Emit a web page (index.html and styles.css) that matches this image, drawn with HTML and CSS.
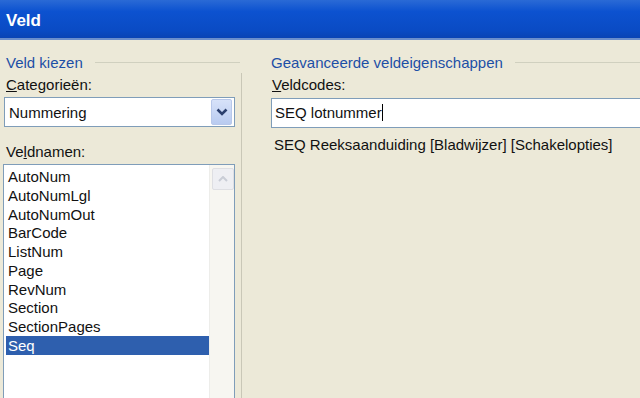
FILE: index.html
```html
<!DOCTYPE html>
<html lang="nl">
<head>
    <meta charset="UTF-8">
    <title>Veld</title>
    <link rel="stylesheet" href="styles.css">
</head>
<body>
    <div class="titlebar">Veld</div>
    <div class="dialog">
      <div class="left">
        <div class="group-head"><span>Veld kiezen</span><div class="rule"></div></div>
        <div class="left-body">
          <div class="label"><u>C</u>ategorieën:</div>
          <div class="combo">
            <span>Nummering</span>
            <div class="combo-btn">
              <svg width="12" height="8" viewBox="0 0 12 8"><path d="M1.5 1.5 L6 6 L10.5 1.5" fill="none" stroke="#2b3f6e" stroke-width="2.6"/></svg>
            </div>
          </div>
          <div class="label label-names">Ve<u>l</u>dnamen:</div>
          <div class="listbox">
            <div class="items">
              <div class="item">AutoNum</div>
              <div class="item">AutoNumLgl</div>
              <div class="item">AutoNumOut</div>
              <div class="item">BarCode</div>
              <div class="item">ListNum</div>
              <div class="item">Page</div>
              <div class="item">RevNum</div>
              <div class="item">Section</div>
              <div class="item">SectionPages</div>
              <div class="item selected">Seq</div>
            </div>
            <div class="scrollbar">
              <div class="scroll-btn">
                <svg width="10" height="6" viewBox="0 0 10 6"><path d="M1 5 L5 1 L9 5" fill="none" stroke="#c9cdd6" stroke-width="2"/></svg>
              </div>
            </div>
          </div>
        </div>
      </div>
      <div class="right">
        <div class="group-head"><span>Geavanceerde veldeigenschappen</span><div class="rule"></div></div>
        <div class="label"><u>V</u>eldcodes:</div>
        <div class="textbox">SEQ lotnummer<span class="caret"></span></div>
        <div class="syntax">SEQ Reeksaanduiding [Bladwijzer] [Schakelopties]</div>
      </div>
    </div>
</body>
</html>
```

FILE: styles.css
```css
body{
    margin: 0;
    height: 398px;
    overflow: hidden;
    background-color: #ece9d8;
    font-family: "Liberation Sans", Arial, sans-serif;
    font-size: 15px;
    color: #111;
}

.titlebar{
    height: 40px;
    box-sizing: border-box;
    padding: 11px 0 0 6px;
    background: linear-gradient(#2a6ad6, #0c52d0 30%, #0a4bc4 80%, #0a44b4);
    color: white;
    font-weight: bold;
    font-size: 17px;
    border-bottom: 2px solid #6c8fcc;
}

.dialog{
    display: flex;
}

.left{
    width: 242px;
}

.right{
    flex: 1;
    padding-left: 29px;
}

.group-head{
    display: flex;
    align-items: center;
    height: 20px;
    margin-top: 12px;
    color: #1c4fa6;
}

.left .group-head{
    padding-left: 6px;
}

.rule{
    flex: 1;
    height: 1px;
    margin-left: 12px;
    background-color: #d0d0bf;
}

.left .rule{
    margin-right: 2px;
}

.left-body{
    border-right: 1px solid #c9c7b7;
    height: 330px;
    padding-top: 2px;
    box-sizing: border-box;
    margin-top: 1px;
}

.label{
    height: 20px;
    line-height: 20px;
    padding-left: 6px;
}

.right .label{
    padding-left: 1px;
    margin-top: 3px;
}

.combo{
    margin: 2px 6px 0 4px;
    height: 30px;
    box-sizing: border-box;
    border: 1px solid #7f9db9;
    background-color: white;
    display: flex;
    align-items: center;
    justify-content: space-between;
    padding: 0 2px 0 4px;
}

.combo-btn{
    width: 19px;
    height: 24px;
    border-radius: 2px;
    background: linear-gradient(#d7e2f9, #b9cbf0);
    border: 1px solid #b8c8ea;
    display: flex;
    align-items: center;
    justify-content: center;
}

.label-names{
    margin-top: 15px;
}

.listbox{
    margin: 2px 6px 0 3px;
    height: 240px;
    border: 1px solid #7f9db9;
    border-bottom: none;
    background-color: white;
    display: flex;
}

.items{
    flex: 1;
    padding: 2px 0 0 2px;
}

.item{
    height: 18.75px;
    line-height: 19px;
    padding-left: 2px;
}

.selected{
    background-color: #2e5fae;
    color: white;
}

.scrollbar{
    width: 24px;
    background-color: #f7f6f1;
    border-left: 1px solid #ededea;
    padding-top: 3px;
}

.scroll-btn{
    width: 20px;
    height: 20px;
    margin-left: 2px;
    border: 1px solid #dedfe3;
    border-radius: 2px;
    background-color: #eeeff3;
    display: flex;
    align-items: center;
    justify-content: center;
}

.textbox{
    margin-top: 3px;
    height: 30px;
    box-sizing: border-box;
    border: 1px solid #7f9db9;
    border-right: none;
    background-color: white;
    padding-left: 3px;
    line-height: 28px;
}

.caret{
    display: inline-block;
    width: 1px;
    height: 17px;
    background-color: black;
    vertical-align: -3px;
}

.syntax{
    margin-top: 8px;
    padding-left: 3px;
}
```
